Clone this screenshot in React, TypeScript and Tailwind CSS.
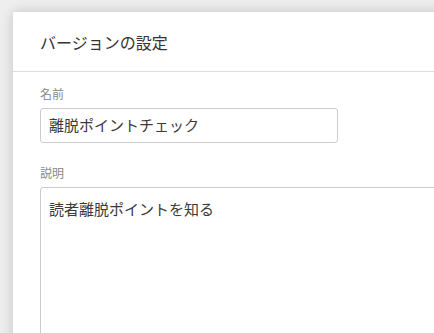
export default function App() {
  return (
    <div
      className="w-[434px] h-[333px] overflow-hidden bg-[#eeeeee] pl-[13px] pt-[12px]"
      style={{ fontFamily: '"Noto Sans CJK JP", "Noto Sans", sans-serif' }}
    >
      <div className="w-[440px] h-[340px] bg-white shadow-[0_0_12px_rgba(0,0,0,0.18)]">
        <div className="h-[60px] flex items-center pl-[27px] border-b border-[#dddddd] text-[16px] text-[#333333]">
          バージョンの設定
        </div>
        <div className="pl-[27px] pt-[13px]">
          <div className="text-[12px] leading-[18px] text-[#888888]">名前</div>
          <div className="mt-[5px] w-[298px] h-[35px] border border-[#cccccc] rounded-[3px] flex items-center pl-[8px] text-[15px] text-[#3a3a3a]">
            離脱ポイントチェック
          </div>
          <div className="mt-[21px] text-[12px] leading-[18px] text-[#888888]">説明</div>
          <div className="mt-[5px] w-[420px] h-[200px] border border-[#cccccc] rounded-[3px] pl-[8px] pt-[10px] text-[15px] leading-[22px] text-[#3a3a3a]">
            読者離脱ポイントを知る
          </div>
        </div>
      </div>
    </div>
  );
}
